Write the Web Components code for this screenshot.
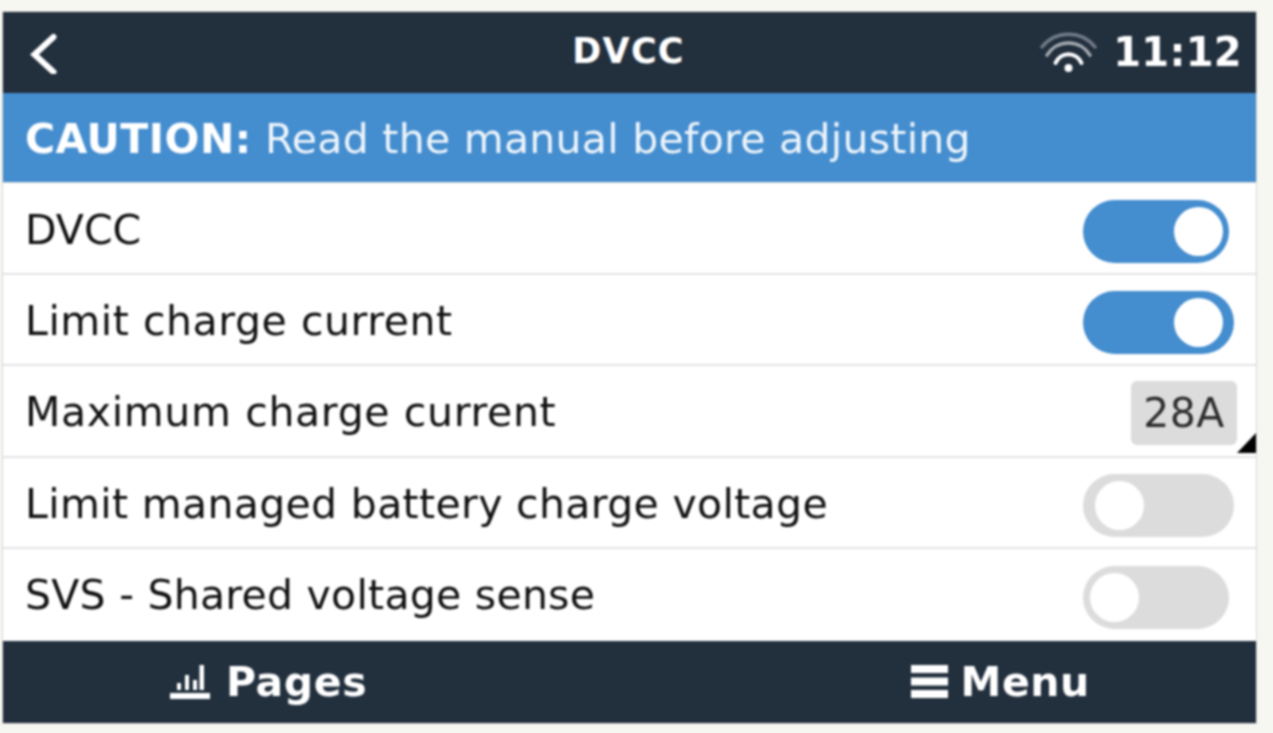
<!DOCTYPE html>
<html><head><meta charset="utf-8">
<style>
html,body{margin:0;height:100%;background:#f7f7f2}
body{padding:12px 17px 10px 3px;box-sizing:border-box;height:733px;overflow:hidden;font-family:"DejaVu Sans",sans-serif}
</style></head><body>
<gx-screen>
<gx-header title="DVCC" time="11:12"></gx-header>
<gx-notice><b>CAUTION:</b> Read the manual before adjusting</gx-notice>
<gx-row label="DVCC" ls="0" t="4"><gx-toggle on w="146" pad="27" dy="8"></gx-toggle></gx-row>
<gx-row label="Limit charge current" ls=".55" t="4"><gx-toggle on w="151" pad="22" dy="7"></gx-toggle></gx-row>
<gx-row label="Maximum charge current" ls=".65" t="2"><gx-value>28A</gx-value></gx-row>
<gx-row label="Limit managed battery charge voltage" ls=".33" t="2"><gx-toggle w="151" pad="22" dy="5"></gx-toggle></gx-row>
<gx-row label="SVS - Shared voltage sense" ls=".25" t="0" last><gx-toggle w="146" pad="27" dy="4"></gx-toggle></gx-row>
<gx-footer></gx-footer>
</gx-screen>
<script>
function def(name,html){customElements.define(name,class extends HTMLElement{
 connectedCallback(){if(this.shadowRoot)return;const s=this.attachShadow({mode:'open'});s.innerHTML=typeof html==='function'?html(this):html;}
});}
def('gx-screen',`<style>:host{display:grid;grid-template-rows:81px 90px repeat(5,1fr) 82px;height:711px;width:1253px;background:#fff;box-shadow:0 0 0 1px #d9d9d6;filter:blur(.8px)}</style><slot></slot>`);
def('gx-header',h=>`<style>
:host{display:grid;grid-template-columns:1fr auto 1fr;align-items:center;background:#222f3d;color:#fff;font-weight:700;padding:0 14px 0 26px}
.t{font-size:35px;letter-spacing:1.2px;margin-left:-14px;margin-bottom:4px}
.r{display:flex;justify-content:flex-end;align-items:center;gap:16px;font-size:40px;letter-spacing:.3px}
.r span{margin-bottom:2px}
svg{display:block}
</style>
<svg width="30" height="42" viewBox="0 0 30 42"><path d="M24.500 5 5.500 22.500 24.500 40" fill="none" stroke="#fff" stroke-width="6" stroke-linecap="round"/></svg>
<span class="t">${h.getAttribute('title')}</span>
<span class="r"><svg width="57" height="42" viewBox="0 0 57 42" fill="none" stroke-linecap="round"><path d="M2 15A34 34 0 0 1 55 15" stroke="#717b86" stroke-width="3.500"/><path d="M7 23.200A25 25 0 0 1 50 23.200" stroke="#a3a9b0" stroke-width="3.500"/><path d="M15.500 31A14 14 0 0 1 41.500 31" stroke="#fff" stroke-width="4"/><circle cx="28.500" cy="36" r="4" fill="#fff"/></svg><span>${h.getAttribute('time')}</span></span>`);
def('gx-notice',`<style>:host{display:flex;align-items:center;background:#448dcf;color:#eef5fb;font-size:41px;padding:2px 0 0 22px;white-space:pre;border-bottom:1px solid #d9d9d6;letter-spacing:.27px}::slotted(b){color:#fff;font-weight:700;letter-spacing:.5px}</style><span><slot></slot></span>`);
def('gx-row',h=>`<style>:host{display:flex;align-items:center;justify-content:space-between;padding-left:22px;position:relative;color:#111;font-size:41px;${h.hasAttribute('last')?'':'border-bottom:2px solid #e3e3e3;'}box-sizing:border-box;min-height:0}
.l{letter-spacing:${h.getAttribute('ls')}px;padding-top:${h.getAttribute('t')}px}</style><span class="l">${h.getAttribute('label')}</span><slot></slot>`);
def('gx-toggle',h=>{const w=h.getAttribute('w'),p=h.getAttribute('pad'),on=h.hasAttribute('on');return `<style>:host{display:flex;align-items:center;width:${w}px;height:63px;border-radius:32px;margin-right:${p}px;margin-top:${h.getAttribute('dy')}px;box-sizing:border-box;background:${on?'#448dcf':'#dcdcdc'};padding-left:${on?91:(w==151?12:7)}px}i{display:block;width:49px;height:49px;border-radius:50%;background:#fff}</style><i></i>`});
def('gx-value',`<style>:host{display:flex;align-items:center;justify-content:center;width:106px;height:64px;background:#dcdcdc;border-radius:6px;margin-right:19px;margin-top:5px;color:#2c2c2c;font-size:41px;letter-spacing:.4px}
.c{position:absolute;right:0;bottom:3px;width:0;height:0;border-style:solid;border-width:0 0 20px 19px;border-color:transparent transparent #000 transparent}</style><slot></slot><span class="c"></span>`);
def('gx-footer',`<style>:host{display:grid;grid-template-columns:1fr 1fr;align-items:center;background:#222f3d;color:#fff;font-weight:700;font-size:41px;letter-spacing:.6px}
.a,.b{display:flex;align-items:center}
.a{padding-left:167px;gap:16px}
.b{padding-left:281px;gap:13px}
svg{display:block}</style>
<span class="a"><svg width="40" height="36" viewBox="0 0 40 36" fill="#fff"><rect y="29" width="40" height="6"/><rect x="7" y="19" width="4" height="7"/><rect x="15" y="11" width="4" height="15"/><rect x="23" y="16" width="4" height="10"/><rect x="29.500" y="1" width="4.500" height="25"/></svg><span>Pages</span></span>
<span class="b"><svg width="37" height="33" viewBox="0 0 37 33" fill="#fff"><rect width="37" height="8"/><rect y="12.500" width="37" height="8"/><rect y="25" width="37" height="8"/></svg><span>Menu</span></span>`);
</script>
</body></html>
